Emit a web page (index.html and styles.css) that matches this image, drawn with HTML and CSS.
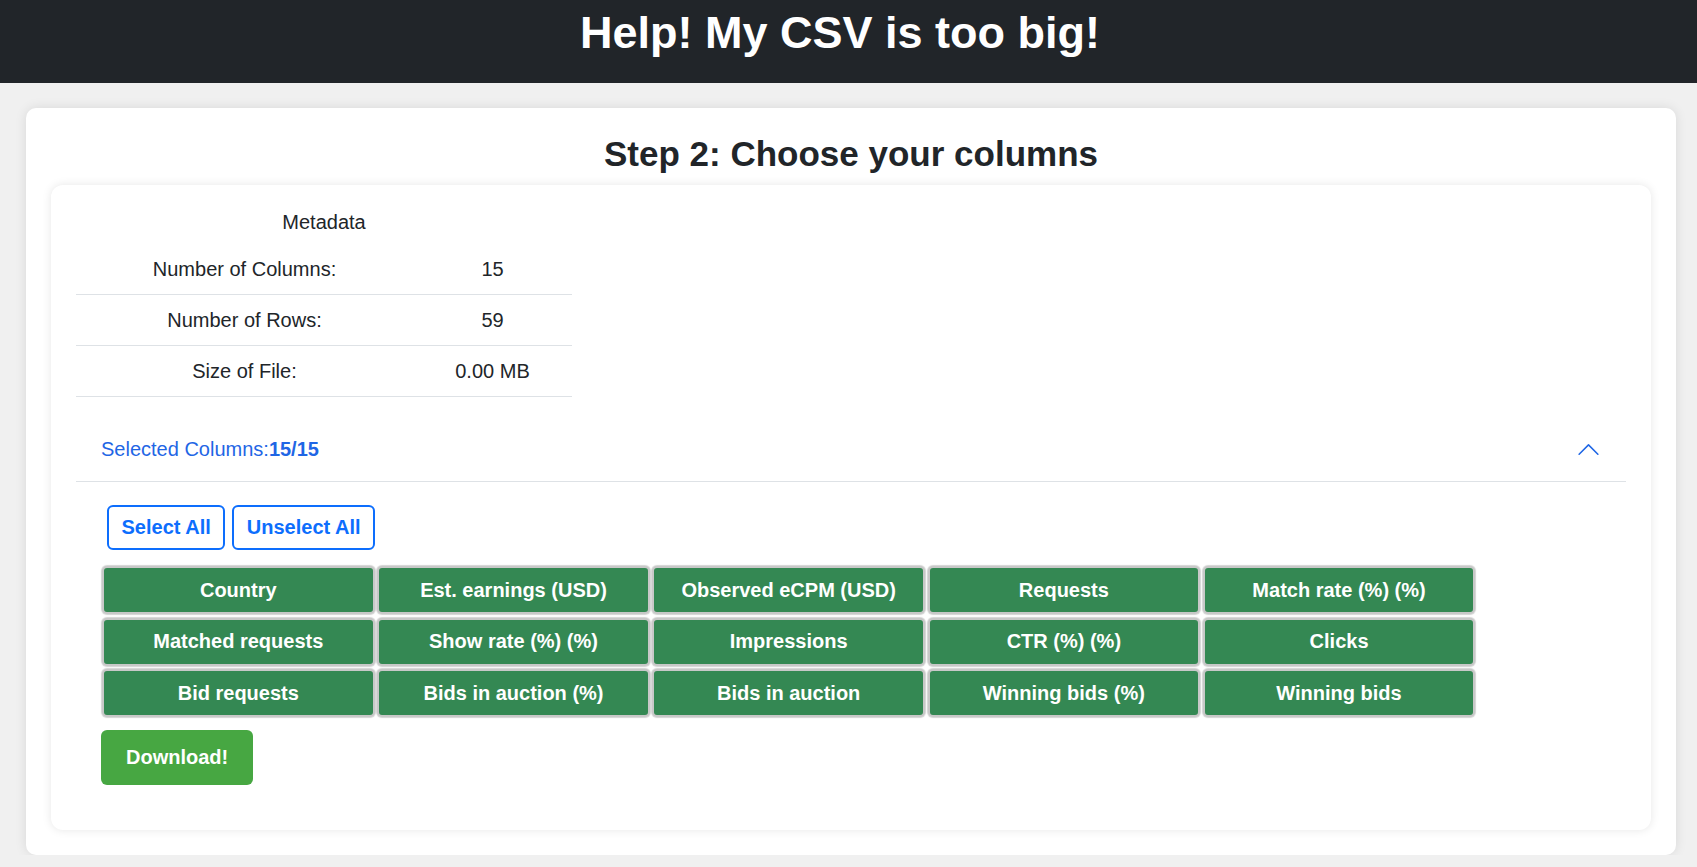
FILE: index.html
```html
<!DOCTYPE html>
<html lang="en">
<head>
<meta charset="utf-8">
<title>Help! My CSV is too big!</title>
<link rel="stylesheet" href="styles.css">
</head>
<body>
<header class="topbar">
  <h1 class="title">Help! My CSV is too big!</h1>
</header>
<main class="main">
  <section class="outer">
    <h2 class="step">Step 2: Choose your columns</h2>
    <div class="card">
      <table class="meta">
        <caption>Metadata</caption>
        <colgroup><col class="c1"><col class="c2"></colgroup>
        <tbody>
          <tr><td>Number of Columns:</td><td>15</td></tr>
          <tr><td>Number of Rows:</td><td>59</td></tr>
          <tr><td>Size of File:</td><td>0.00 MB</td></tr>
        </tbody>
      </table>
      <div class="accordion">
        <button class="acc-head" type="button">
          <span>Selected Columns:<b>15/15</b></span>
          <svg class="chev" viewBox="0 0 16 16" width="25" height="25" aria-hidden="true"><path fill="currentColor" d="M7.646 4.646a.5.5 0 0 1 .708 0l6 6a.5.5 0 0 1-.708.708L8 5.707l-5.646 5.647a.5.5 0 0 1-.708-.708l6-6z"/></svg>
        </button>
        <div class="acc-body">
          <div class="bulk">
            <button class="outline" type="button">Select All</button>
            <button class="outline" type="button">Unselect All</button>
          </div>
          <div class="cols">
            <button class="col" type="button">Country</button>
            <button class="col" type="button">Est. earnings (USD)</button>
            <button class="col" type="button">Observed eCPM (USD)</button>
            <button class="col" type="button">Requests</button>
            <button class="col" type="button">Match rate (%) (%)</button>
            <button class="col" type="button">Matched requests</button>
            <button class="col" type="button">Show rate (%) (%)</button>
            <button class="col" type="button">Impressions</button>
            <button class="col" type="button">CTR (%) (%)</button>
            <button class="col" type="button">Clicks</button>
            <button class="col" type="button">Bid requests</button>
            <button class="col" type="button">Bids in auction (%)</button>
            <button class="col" type="button">Bids in auction</button>
            <button class="col" type="button">Winning bids (%)</button>
            <button class="col" type="button">Winning bids</button>
          </div>
          <button class="download" type="button">Download!</button>
        </div>
      </div>
    </div>
  </section>
</main>
</body>
</html>
```
FILE: styles.css
```css
html, body {
  margin: 0;
  padding: 0;
}
body {
  background: #f0f0f0;
  font-family: "Liberation Sans", Arial, sans-serif;
  font-size: 20px;
  color: #212529;
}
.topbar {
  background: #212529;
  padding: 6px 17px 23px 0;
  text-align: center;
}
.title {
  margin: 0;
  font-size: 45px;
  line-height: 54px;
  font-weight: 700;
  color: #ffffff;
}
.main {
  padding-top: 25px;
}
.outer {
  margin: 0 21px 0 26px;
  padding: 25px;
  background: #ffffff;
  border-radius: 10px;
  box-shadow: 0 0 12px rgba(0, 0, 0, 0.1);
}
.step {
  margin: 0 0 10px;
  font-size: 35px;
  line-height: 42px;
  font-weight: 700;
  text-align: center;
  color: #212529;
}
.card {
  padding: 10px 25px 25px;
  background: #ffffff;
  border-radius: 12px;
  box-shadow: 0 0 10px rgba(0, 0, 0, 0.1);
}
.meta {
  width: 496px;
  table-layout: fixed;
  border-collapse: collapse;
  margin-bottom: 21px;
}
.meta .c1 { width: 337px; }
.meta .c2 { width: 159px; }
.meta caption {
  caption-side: top;
  text-align: center;
  padding: 12px 0 7px;
  line-height: 30px;
}
.meta td {
  text-align: center;
  padding: 10px 0;
  line-height: 30px;
  border-bottom: 1px solid #dee2e6;
}
.acc-head {
  display: flex;
  align-items: center;
  justify-content: space-between;
  width: 100%;
  padding: 20px 25px;
  border: 0;
  border-bottom: 1px solid #dee2e6;
  background: #ffffff;
  font-family: inherit;
  font-size: 20px;
  line-height: 23px;
  color: #1f66e5;
  text-align: left;
}
.chev {
  margin: -1px 0;
  color: #1f66e5;
}
.acc-body {
  padding: 20px 25px;
}
.bulk {
  display: flex;
  gap: 7px;
  margin: 3px 0 0 6px;
}
.outline {
  height: 45px;
  padding: 9px 12.5px;
  border: 2px solid #0d6efd;
  border-radius: 6px;
  background: #ffffff;
  color: #0d6efd;
  font-family: inherit;
  font-size: 20px;
  line-height: 23px;
  font-weight: 700;
}
.cols {
  display: grid;
  grid-template-columns: repeat(5, 272.6px);
  grid-auto-rows: 48px;
  gap: 3.5px 2.6px;
  margin: 16px 0 0 1px;
}
.col {
  padding: 0 4px;
  border: 2px solid #c8c8c8;
  border-radius: 5px;
  background: #348853;
  box-shadow: 0 0 1px 1px #d4d4d4;
  color: #ffffff;
  font-family: inherit;
  font-size: 20px;
  line-height: 23px;
  font-weight: 700;
}
.download {
  margin-top: 13px;
  height: 55px;
  padding: 16px 25px;
  border: 0;
  border-radius: 6px;
  background: #47a742;
  color: #ffffff;
  font-family: inherit;
  font-size: 20px;
  line-height: 23px;
  font-weight: 700;
}
```
